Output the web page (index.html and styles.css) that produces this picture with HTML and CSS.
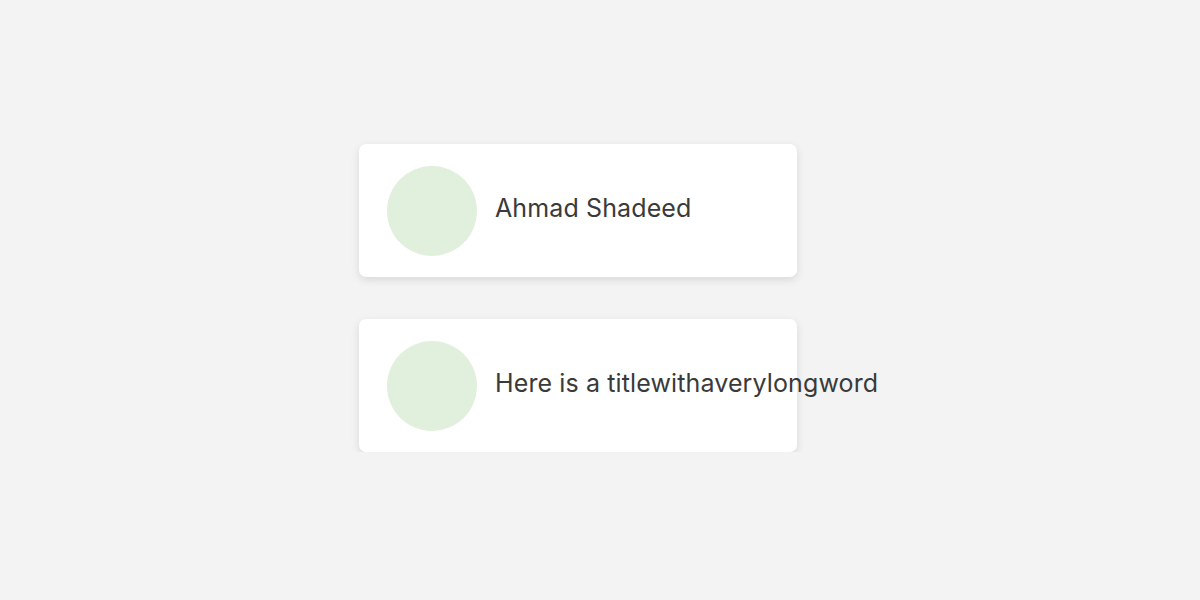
FILE: index.html
```html
<!DOCTYPE html>
<html>
<head>
<meta charset="utf-8">
<link rel="stylesheet" href="styles.css">
</head>
<body>
<main class="wrap">
  <div class="card">
    <div class="avatar"></div>
    <p class="title">Ahmad Shadeed</p>
  </div>
  <div class="card">
    <div class="avatar"></div>
    <p class="title">Here is a titlewithaverylongword</p>
  </div>
</main>
</body>
</html>
```

FILE: styles.css
```css
html, body {
  margin: 0;
  padding: 0;
  background: #f3f3f3;
  font-family: "Inter", "Noto Sans", sans-serif;
}
.wrap {
  width: 482px;
  margin: 0 auto;
  padding-top: 144px;
  display: flex;
  flex-direction: column;
  gap: 42px;
}
.card {
  box-sizing: border-box;
  width: 438px;
  height: 133px;
  background: #fff;
  border-radius: 7px;
  box-shadow: 0 3px 8px rgba(0,0,0,0.11);
  display: flex;
  align-items: center;
  padding: 0 28px;
  gap: 18px;
}
.avatar {
  flex: none;
  width: 90px;
  height: 90px;
  border-radius: 50%;
  background: #e1f0dc;
}
.title {
  margin: 0 0 6px;
  font-size: 25px;
  letter-spacing: 0.12px;
  color: #3a3a3a;
  white-space: nowrap;
}
```
